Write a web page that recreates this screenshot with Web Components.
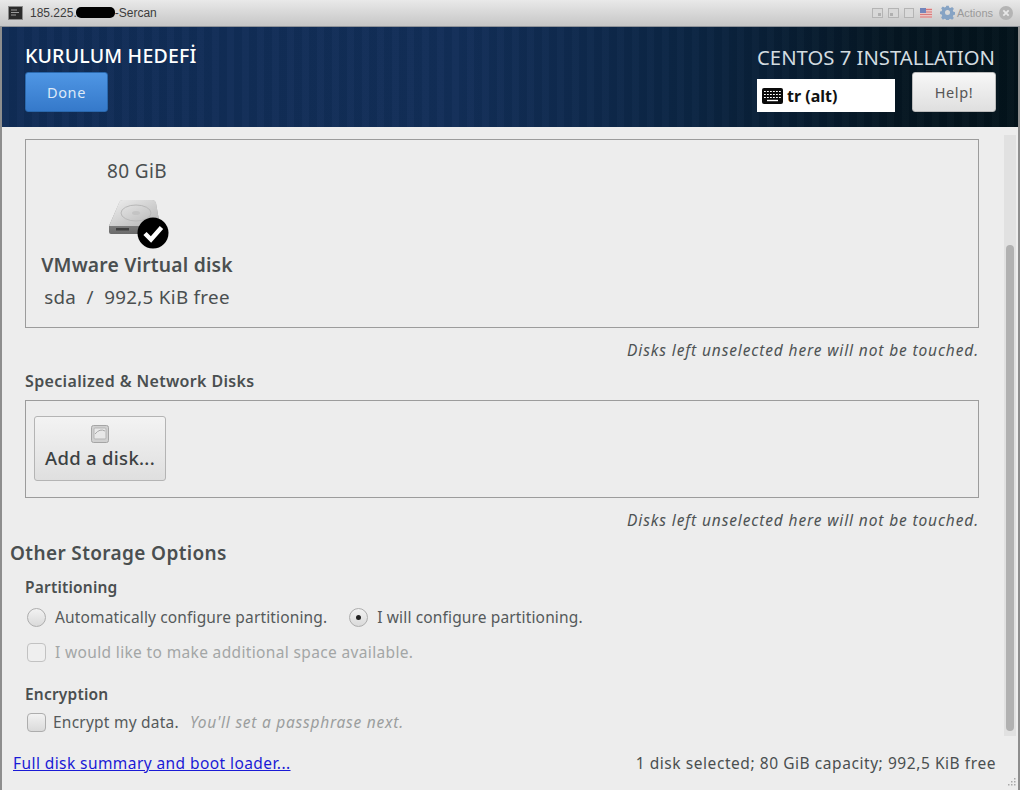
<!DOCTYPE html>
<html lang="en">
<head>
<meta charset="utf-8">
<title>Kurulum Hedefi</title>
<style>
  html, body { margin: 0; padding: 0; }
  body {
    width: 1020px;
    height: 790px;
    overflow: hidden;
    background: #ededed;
    color: #2e3436;
    font-family: "Noto Sans", "Open Sans", sans-serif;
  }
</style>
</head>
<body>
<console-window>
  <vm-titlebar slot="titlebar"></vm-titlebar>
  <spoke-header slot="header" title="KURULUM HEDEFİ" product="CENTOS 7 INSTALLATION" layout="tr (alt)"></spoke-header>
  <scroll-area>
    <disk-box height="189"><disk-tile></disk-tile></disk-box>
    <disk-note></disk-note>
    <section-label>Specialized &amp; Network Disks</section-label>
    <disk-box height="98"><add-disk></add-disk></disk-box>
    <disk-note></disk-note>
    <storage-options></storage-options>
  </scroll-area>
  <spoke-footer slot="footer"></spoke-footer>
</console-window>

<script>
class ConsoleWindow extends HTMLElement {
  constructor () {
    super()
    this.attachShadow({ mode: 'open' }).innerHTML = /*html*/`
    <style>
      :host { display: flex; flex-direction: column; width: 1020px; height: 790px; box-sizing: border-box; position: relative; }
      .main { flex: 1; min-height: 0; display: flex; flex-direction: column; border-left: 2px solid #8e8e8e; border-right: 2px solid #8e8e8e; }
      .grip { position: absolute; right: 3px; bottom: 3px; }
    </style>
    <slot name="titlebar"></slot>
    <div class="main">
      <slot name="header"></slot>
      <slot></slot>
      <slot name="footer"></slot>
    </div>
    <svg class="grip" width="10" height="10" viewBox="0 0 10 10" fill="#a9a9a9">
      <rect x="7" y="1" width="1.5" height="1.5"/><rect x="4" y="4" width="1.5" height="1.5"/><rect x="7" y="4" width="1.5" height="1.5"/>
      <rect x="1" y="7" width="1.5" height="1.5"/><rect x="4" y="7" width="1.5" height="1.5"/><rect x="7" y="7" width="1.5" height="1.5"/>
    </svg>`
  }
}

class VmTitlebar extends HTMLElement {
  constructor () {
    super()
    this.attachShadow({ mode: 'open' }).innerHTML = /*html*/`
    <style>
      :host { display: flex; align-items: center; height: 27px; flex: none; box-sizing: border-box; padding: 0 7px 1px 8px;
        background: linear-gradient(#e9e9e9, #c6c6c6); border-bottom: 1px solid #8f9399;
        font: 12px "Liberation Sans", Arial, sans-serif; color: #3c3c3c; }
      .name { margin-left: 7px; flex: 1; display: flex; align-items: center; }
      .name i { width: 39px; height: 11px; margin-left: -1px; border-radius: 5px; background: #000; }
      .tools { display: flex; align-items: center; }
      .tools svg { display: block; }
      .actions { color: #9a9a9a; font-size: 11px; margin: 0 6px 0 2px; }
    </style>
    <svg width="15" height="14" viewBox="0 0 15 14">
      <rect x=".5" y=".5" width="14" height="13" fill="#2b2b2b" stroke="#8a8a8a"/>
      <path d="M3 4h6M3 6.500h8M3 9h5" stroke="#9c9c9c" stroke-width="1"/>
    </svg>
    <span class="name">185.225.<i></i>-Sercan</span>
    <div class="tools">
      <svg width="11" height="10" viewBox="0 0 11 10" fill="none" stroke="#b4b4b4"><rect x=".5" y=".5" width="10" height="9" fill="#d8d8d8"/><rect x="6" y="5" width="3" height="3" fill="#b0b0b0" stroke="none"/></svg>
      <svg width="11" height="10" viewBox="0 0 11 10" fill="none" stroke="#b4b4b4" style="margin-left:5px"><rect x=".5" y=".5" width="10" height="9" fill="#d8d8d8"/><rect x="2" y="5" width="3" height="3" fill="#b0b0b0" stroke="none"/></svg>
      <svg width="10" height="10" viewBox="0 0 10 10" fill="none" stroke="#b4b4b4" style="margin-left:5px"><rect x=".5" y=".5" width="9" height="9" fill="#dadada"/></svg>
      <svg width="12" height="10" viewBox="0 0 12 10" style="margin-left:6px">
        <rect width="12" height="10" fill="#e9c4c4"/>
        <path d="M0 1.500h12M0 4h12M0 6.500h12M0 9h12" stroke="#d97a7a" stroke-width="1.200"/>
        <rect width="6" height="5" fill="#7385bb"/>
      </svg>
      <svg width="15" height="15" viewBox="0 0 24 24" fill="#86a3c4" style="margin-left:8px">
        <path fill-rule="evenodd" d="M10 1h4l.6 3 2.200.9 2.600-1.700 2.800 2.800-1.700 2.600.9 2.200 3 .6v4l-3 .6-.9 2.200 1.700 2.600-2.800 2.800-2.600-1.700-2.200.9-.6 3h-4l-.6-3-2.200-.9-2.600 1.700L1.800 19.900l1.700-2.600-.9-2.200-3-.6v-4l3-.6.9-2.200L1.800 5 4.600 2.200l2.600 1.700 2.200-.9zM12 8a4 4 0 1 0 0 8 4 4 0 0 0 0-8z"/>
      </svg>
      <span class="actions">Actions</span>
      <svg width="14" height="14" viewBox="0 0 14 14"><circle cx="7" cy="7" r="7" fill="#b4b4b4"/><path d="M4.300 4.300l5.400 5.400M9.700 4.300l-5.400 5.400" stroke="#e8e8e8" stroke-width="1.800"/></svg>
    </div>`
  }
}

class SpokeHeader extends HTMLElement {
  constructor () {
    super()
    this.attachShadow({ mode: 'open' }).innerHTML = /*html*/`
    <style>
      :host { display: flex; justify-content: space-between; height: 100px; flex: none; box-sizing: border-box; padding: 17px 22px 0 23px; color: #fff;
        background:
          repeating-linear-gradient(90deg, rgba(255,255,255,.016) 0 7px, rgba(0,0,0,.03) 7px 15px),
          linear-gradient(90deg, #102c56 0%, #122e58 45%, #0b2543 68%, #051622 88%, #03131b 100%); }
      .left, .right { display: flex; flex-direction: column; }
      .right { align-items: flex-end; }
      h1 { margin: -1px 0 0; font-size: 19.5px; line-height: 25px; font-weight: 500; letter-spacing: .2px; }
      .left button { margin-top: 4px; }
      .product { font-size: 20.3px; line-height: 26px; margin-bottom: 2px; color: #d3dce0; font-weight: 400; margin-right: 1px; }
      .controls { display: flex; align-items: flex-start; gap: 17px; }
      button { box-sizing: border-box; font: inherit; height: 40px; font-size: 14.5px; letter-spacing: .6px; border-radius: 3px; }
      .done { width: 83px; color: #dce9f8; border: 1px solid #2a68ad; background: linear-gradient(#4f96e4, #3579ca); }
      .help { width: 84px; color: #555; border: 1px solid #bbb; background: linear-gradient(#f7f7f7, #dfdfdf); }
      .layout { display: flex; align-items: center; gap: 4px; box-sizing: border-box; width: 138px; height: 33px; margin-top: 7px; padding-left: 5px;
        background: #fff; color: #111; font-size: 16px; font-weight: 700; }
    </style>
    <div class="left">
      <h1></h1>
      <button class="done">Done</button>
    </div>
    <div class="right">
      <div class="product"></div>
      <div class="controls">
        <div class="layout">
          <svg width="21" height="16" viewBox="0 0 21 16">
            <rect width="21" height="16" rx="2" fill="#0a0a0a"/>
            <path d="M2 3.500h17M2 6.500h17M2 9.500h17" stroke="#fff" stroke-width="1.200" stroke-dasharray="1.800 1.200"/>
            <path d="M5 12.500h11" stroke="#fff" stroke-width="1.400"/>
          </svg>
          <span class="kb"></span>
        </div>
        <button class="help">Help!</button>
      </div>
    </div>`
    this.shadowRoot.querySelector('h1').textContent = this.getAttribute('title')
    this.shadowRoot.querySelector('.product').textContent = this.getAttribute('product')
    this.shadowRoot.querySelector('.kb').textContent = this.getAttribute('layout')
  }
}

class ScrollArea extends HTMLElement {
  constructor () {
    super()
    this.attachShadow({ mode: 'open' }).innerHTML = /*html*/`
    <style>
      :host { display: flex; flex: 1; min-height: 0; overflow: hidden; }
      .content { flex: 1; min-width: 0; padding: 12px 0 0 8px; }
      .bar { flex: none; width: 12px; margin: 8px 2px 4px 0; box-sizing: border-box; background: #e1e1e1; padding: 110px 2px 0; }
      .thumb { height: 486px; background: #b1b1b1; border-radius: 5px; }
    </style>
    <div class="content"><slot></slot></div>
    <div class="bar"><div class="thumb"></div></div>`
  }
}

class DiskBox extends HTMLElement {
  constructor () {
    super()
    this.attachShadow({ mode: 'open' }).innerHTML = /*html*/`
    <style>
      :host { display: block; box-sizing: border-box; width: 954px; margin-left: 15px; border: 1px solid #9c9c9c; }
    </style>
    <slot></slot>`
    this.style.height = this.getAttribute('height') + 'px'
  }
}

class DiskTile extends HTMLElement {
  constructor () {
    super()
    this.attachShadow({ mode: 'open' }).innerHTML = /*html*/`
    <style>
      :host { display: flex; flex-direction: column; align-items: center; width: 222px; padding-top: 19px; color: #4a4f50; }
      .size { font-size: 19px; line-height: 24px; letter-spacing: .4px; }
      svg { margin: 15px 0 0 3px; display: block; }
      .name { font-size: 19.3px; line-height: 24px; font-weight: 600; margin-top: 3px; white-space: nowrap; letter-spacing: .2px; }
      .free { font-size: 18.8px; line-height: 24px; margin-top: 8px; white-space: nowrap; letter-spacing: .3px; }
    </style>
    <div class="size">80 GiB</div>
    <svg width="62" height="52" viewBox="0 0 62 52">
      <defs>
        <linearGradient id="top" x1="0" y1="0" x2="1" y2="1"><stop offset="0" stop-color="#efefef"/><stop offset="1" stop-color="#b4b4b4"/></linearGradient>
        <linearGradient id="edge" x1="0" y1="0" x2="0" y2="1"><stop offset="0" stop-color="#b5b5b5"/><stop offset="1" stop-color="#6a6a6a"/></linearGradient>
      </defs>
      <path d="M1 28 L11 5 Q12 2 15 2 H44 Q47 2 48 5 L52 28 V34 Q52 36 50 36 H3 Q1 36 1 34 Z" fill="url(#edge)"/>
      <path d="M1 28 L11 5 Q12 2 15 2 H44 Q47 2 48 5 L52 28 Z" fill="url(#top)"/>
      <ellipse cx="28" cy="15" rx="15" ry="8" fill="none" stroke="#b8b8b8"/>
      <ellipse cx="28" cy="15" rx="4" ry="2" fill="#c4c4c4"/>
      <rect x="8" y="30" width="13" height="2.500" fill="#3f3f3f"/>
      <circle cx="45" cy="35" r="15.500" fill="#000"/>
      <path d="M37 35.500 L43 41.500 L53.500 29.500" fill="none" stroke="#fff" stroke-width="4.500"/>
    </svg>
    <div class="name">VMware Virtual disk</div>
    <div class="free">sda &nbsp;/&nbsp; 992,5 KiB free</div>`
  }
}

class DiskNote extends HTMLElement {
  constructor () {
    super()
    this.attachShadow({ mode: 'open' }).innerHTML = /*html*/`
    <style>
      :host { display: block; width: 969px; box-sizing: border-box; text-align: right; margin-top: 12px; font-size: 15.5px; line-height: 20px; font-style: italic; color: #4e5354; letter-spacing: .87px; white-space: nowrap; }
    </style>
    Disks left unselected here will not be touched.`
  }
}

class SectionLabel extends HTMLElement {
  constructor () {
    super()
    this.attachShadow({ mode: 'open' }).innerHTML = /*html*/`
    <style>
      :host { display: block; margin: 11px 0 9px 15px; font-size: 16px; line-height: 20px; font-weight: 600; color: #4a4f50; letter-spacing: .35px; }
    </style>
    <slot></slot>`
  }
}

class AddDisk extends HTMLElement {
  constructor () {
    super()
    this.attachShadow({ mode: 'open' }).innerHTML = /*html*/`
    <style>
      :host { display: flex; flex-direction: column; align-items: center; box-sizing: border-box; width: 132px; height: 65px; margin: 15px 0 0 8px; padding-top: 8px;
        border: 1px solid #b4b4b4; border-radius: 3px; background: linear-gradient(#f3f3f3, #dfdfdf); color: #3c4142; }
      svg { display: block; }
      span { font-size: 18.5px; line-height: 24px; font-weight: 500; margin-top: 3px; letter-spacing: .3px; white-space: nowrap; }
    </style>
    <svg width="18" height="18" viewBox="0 0 18 18">
      <rect x=".5" y=".5" width="17" height="17" rx="2" fill="#d0d0d0" stroke="#a5a5a5"/>
      <rect x="3" y="3" width="12" height="11" rx="1" fill="#e8e8e8" stroke="#b5b5b5"/>
      <path d="M4 9 Q9 3 14 6" fill="none" stroke="#a8a8a8"/>
    </svg>
    <span>Add a disk...</span>`
  }
}

class OptionControl extends HTMLElement {
  constructor () {
    super()
    const round = this.getAttribute('kind') === 'radio'
    const checked = this.hasAttribute('checked')
    const off = this.hasAttribute('disabled')
    this.attachShadow({ mode: 'open' }).innerHTML = /*html*/`
    <style>
      :host { display: inline-flex; align-items: center; font-size: 15.5px; line-height: 20px; letter-spacing: ${off ? '.35px' : '.14px'}; color: ${off ? '#a3a6a6' : '#555a5b'}; white-space: nowrap; }
      .mark { box-sizing: border-box; flex: none; width: 19px; height: 19px; margin-right: var(--mark-gap, 9px); display: flex; align-items: center; justify-content: center;
        border: 1px solid ${off ? '#c2c2c2' : '#adadad'}; border-radius: ${round ? '50%' : '4px'};
        background: ${off ? '#efefef' : 'linear-gradient(#f2f2f2, #dadada)'}; }
      .mark i { width: 5px; height: 5px; border-radius: 50%; background: #222; }
    </style>
    <span class="mark">${checked ? '<i></i>' : ''}</span><slot></slot>`
  }
}

class StorageOptions extends HTMLElement {
  constructor () {
    super()
    this.attachShadow({ mode: 'open' }).innerHTML = /*html*/`
    <style>
      :host { display: block; color: #4a4f50; }
      h2 { margin: 10px 0 0 0; font-size: 19px; line-height: 26px; font-weight: 600; color: #4a4f50; letter-spacing: .37px; }
      h3 { margin: 0 0 0 15px; font-size: 15.5px; line-height: 20px; font-weight: 600; color: #4a4f50; letter-spacing: .2px; }
      .partition { margin-top: 11px; }
      .row { display: flex; align-items: center; margin-left: 17px; }
      .first { margin-top: 10px; gap: 22px; }
      .space { margin-top: 15px; }
      .encryption { margin-top: 22px; }
      .encrypt { margin-top: 8px; --mark-gap: 7px; }
      .encrypt option-control { letter-spacing: .23px; }
      em { color: #9b9e9e; margin-left: 11px; letter-spacing: .75px; }
    </style>
    <h2>Other Storage Options</h2>
    <h3 class="partition">Partitioning</h3>
    <div class="row first">
      <option-control kind="radio">Automatically configure partitioning.</option-control>
      <option-control kind="radio" checked>I will configure partitioning.</option-control>
    </div>
    <div class="row space">
      <option-control kind="check" disabled>I would like to make additional space available.</option-control>
    </div>
    <h3 class="encryption">Encryption</h3>
    <div class="row encrypt">
      <option-control kind="check">Encrypt my data.<em>You'll set a passphrase next.</em></option-control>
    </div>`
  }
}

class SpokeFooter extends HTMLElement {
  constructor () {
    super()
    this.attachShadow({ mode: 'open' }).innerHTML = /*html*/`
    <style>
      :host { display: flex; justify-content: space-between; align-items: center; flex: none; height: 50px; box-sizing: border-box; padding: 0 22px 4px 11px; font-size: 15.5px; color: #4a4f50; white-space: nowrap; }
      a { color: #1a1ad6; text-decoration: underline; letter-spacing: .42px; }
      span { letter-spacing: .56px; }
    </style>
    <a href="#">Full disk summary and boot loader...</a>
    <span>1 disk selected; 80 GiB capacity; 992,5 KiB free</span>`
  }
}

customElements.define('console-window', ConsoleWindow)
customElements.define('vm-titlebar', VmTitlebar)
customElements.define('spoke-header', SpokeHeader)
customElements.define('scroll-area', ScrollArea)
customElements.define('disk-box', DiskBox)
customElements.define('disk-tile', DiskTile)
customElements.define('disk-note', DiskNote)
customElements.define('section-label', SectionLabel)
customElements.define('add-disk', AddDisk)
customElements.define('option-control', OptionControl)
customElements.define('storage-options', StorageOptions)
customElements.define('spoke-footer', SpokeFooter)
</script>
</body>
</html>
